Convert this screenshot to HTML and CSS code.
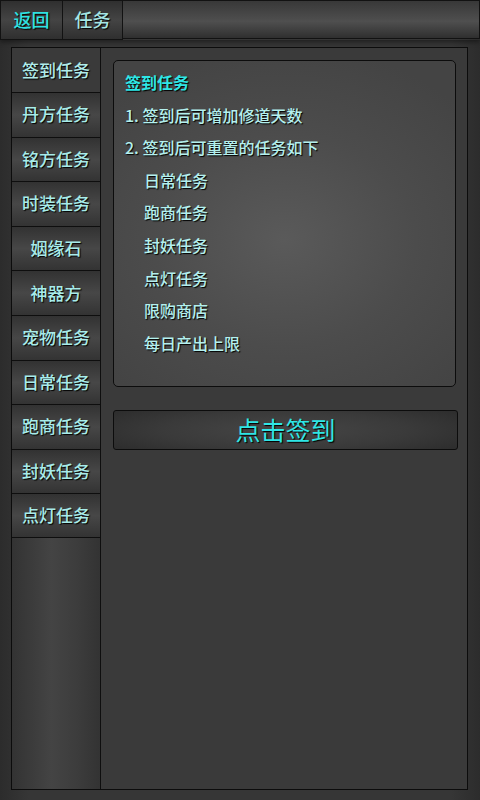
FILE: index.html
```html
<!DOCTYPE html>
<html lang="zh-CN">
<head>
<meta charset="utf-8">
<title>任务</title>
<link rel="stylesheet" href="styles.css">
</head>
<body>
<header class="topbar">
  <div class="top-btn back">返回</div>
  <div class="top-btn title">任务</div>
  <div class="top-fill"></div>
</header>
<main class="frame">
  <nav class="tabs">
    <div class="tab active">签到任务</div>
    <div class="tab">丹方任务</div>
    <div class="tab">铭方任务</div>
    <div class="tab">时装任务</div>
    <div class="tab">姻缘石</div>
    <div class="tab">神器方</div>
    <div class="tab">宠物任务</div>
    <div class="tab">日常任务</div>
    <div class="tab">跑商任务</div>
    <div class="tab">封妖任务</div>
    <div class="tab last">点灯任务</div>
  </nav>
  <section class="content">
    <div class="info">
      <div class="info-title">签到任务</div>
      <div class="line">1. 签到后可增加修道天数</div>
      <div class="line">2. 签到后可重置的任务如下</div>
      <div class="line sub">日常任务</div>
      <div class="line sub">跑商任务</div>
      <div class="line sub">封妖任务</div>
      <div class="line sub">点灯任务</div>
      <div class="line sub">限购商店</div>
      <div class="line sub">每日产出上限</div>
    </div>
    <div class="sign-btn">点击签到</div>
  </section>
</main>
</body>
</html>
```

FILE: styles.css
```css
* { box-sizing: border-box; }
html, body { margin: 0; padding: 0; }
body {
  width: 480px;
  height: 800px;
  overflow: hidden;
  background: linear-gradient(90deg, #2c2c2c 0%, #363636 6%, #363636 94%, #2c2c2c 100%);
  font-family: "Noto Sans CJK SC", "Noto Sans", sans-serif;
  font-weight: 500;
  text-shadow: 1px 1px 1px #000;
}
.topbar {
  display: flex;
  height: 40px;
  box-shadow: 0 2px 5px rgba(0,0,0,0.45);
}
.top-btn {
  display: flex;
  align-items: center;
  justify-content: center;
  height: 40px;
  border: 1px solid #121212;
  background: linear-gradient(180deg, #2f2f2f 0%, #444 50%, #2f2f2f 100%);
  font-size: 18px;
  padding-bottom: 2px;
}
.back { width: 63px; color: #2fe2e2; }
.title { width: 61px; margin-left: -1px; color: #a6e6e4; }
.top-fill {
  flex: 1;
  height: 39px;
  border: 1px solid #121212;
  border-left: none;
  background: linear-gradient(180deg, #383838 0%, #4f4f4f 55%, #3a3a3a 85%, #2f2f2f 100%);
}
.frame {
  display: flex;
  margin: 7px 12px 0 11px;
  height: 743px;
  border: 1px solid #0c0c0c;
  background: #3a3a3a;
}
.tabs {
  width: 89px;
  flex: none;
  border-right: 1px solid #0e0e0e;
  background: linear-gradient(90deg, #333 0%, #444 45%, #3c3c3c 75%, #333 100%);
}
.tab {
  height: 44.6px;
  display: flex;
  align-items: center;
  justify-content: center;
  font-size: 17px;
  color: #a8ecea;
  border-top: 1px solid #0e0e0e;
  background: linear-gradient(180deg, #323232 0%, #474747 50%, #333 100%);
  padding-bottom: 2px;
}
.tab.active {
  height: 44px;
  border-top: none;
  background: #3a3a3a;
  color: #b0ecea;
}
.tab.last { border-bottom: 1px solid #0e0e0e; }
.content {
  flex: 1;
  padding: 12px 10px 0 12px;
  display: flex;
  flex-direction: column;
}
.info {
  width: 343px;
  height: 327px;
  border: 1px solid #0c0c0c;
  border-radius: 5px;
  background: radial-gradient(ellipse 70% 60% at 50% 55%, #5a5a5a 0%, #4c4c4c 55%, #444 100%);
  padding: 5px 10px 0 11px;
}
.info-title {
  font-size: 16px;
  font-weight: bold;
  line-height: 32.6px;
  color: #2ee6e6;
}
.line {
  font-size: 16px;
  line-height: 32.6px;
  color: #b4f0ee;
  white-space: nowrap;
}
.line.sub { padding-left: 19px; }
.sign-btn {
  margin-top: 23px;
  width: 345px;
  height: 40px;
  border: 1px solid #0c0c0c;
  border-radius: 3px;
  background: radial-gradient(ellipse 60% 80% at 50% 50%, #464646 0%, #3a3a3a 60%, #2e2e2e 100%);
  display: flex;
  align-items: center;
  justify-content: center;
  font-size: 25px;
  font-weight: 400;
  color: #2fe6e6;
  padding-bottom: 2px;
}
```
